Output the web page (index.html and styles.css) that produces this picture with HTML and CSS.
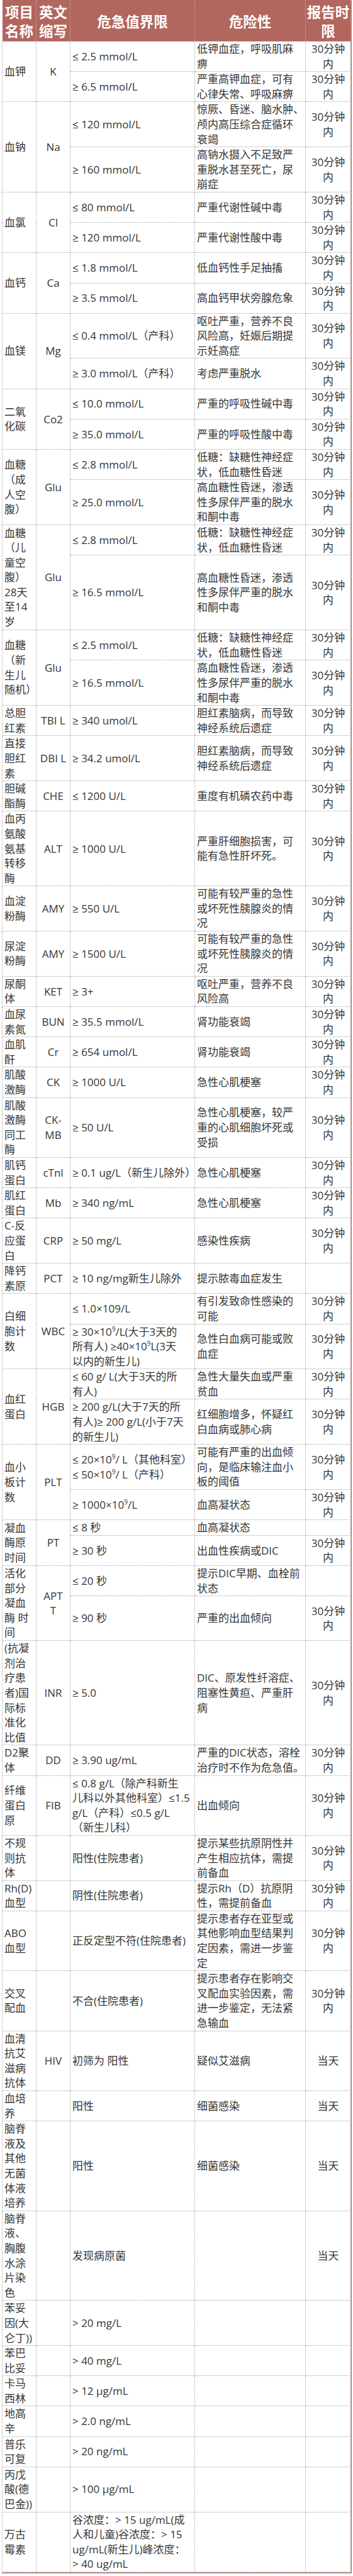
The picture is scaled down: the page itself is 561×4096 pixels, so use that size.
FILE: index.html
```html
<!DOCTYPE html>
<html lang="zh-CN">
<head>
<meta charset="utf-8">
<title>危急值报告</title>
<link rel="stylesheet" href="styles.css">
</head>
<body>
<div class="frame">
<table class="grid">
<colgroup><col class="w1"><col class="w2"><col class="w3"><col class="w4"><col class="w5"></colgroup>
<thead>
<tr><th>项目<br>名称</th><th>英文<br>缩写</th><th>危急值界限</th><th>危险性</th><th>报告时<br>限</th></tr>
</thead>
<tbody>
<tr><td rowspan="2">血钾</td><td rowspan="2" class="mid">K</td><td>≤ 2.5 mmol/L</td><td>低钾血症，呼吸肌麻<br>痹</td><td class="mid">30分钟<br>内</td></tr>
<tr><td>≥ 6.5 mmol/L</td><td>严重高钾血症，可有<br>心律失常、呼吸麻痹</td><td class="mid">30分钟<br>内</td></tr>

<tr><td rowspan="2">血钠</td><td rowspan="2" class="mid">Na</td><td>≤ 120 mmol/L</td><td>惊厥、昏迷、脑水肿、<br>颅内高压综合症循环<br>衰竭</td><td class="mid">30分钟<br>内</td></tr>
<tr><td>≥ 160 mmol/L</td><td>高钠水摄入不足致严<br>重脱水甚至死亡，尿<br>崩症</td><td class="mid">30分钟<br>内</td></tr>

<tr><td rowspan="2">血氯</td><td rowspan="2" class="mid">Cl</td><td>≤ 80 mmol/L</td><td>严重代谢性碱中毒</td><td class="mid">30分钟<br>内</td></tr>
<tr><td>≥ 120 mmol/L</td><td>严重代谢性酸中毒</td><td class="mid">30分钟<br>内</td></tr>

<tr><td rowspan="2">血钙</td><td rowspan="2" class="mid">Ca</td><td>≤ 1.8 mmol/L</td><td>低血钙性手足抽搐</td><td class="mid">30分钟<br>内</td></tr>
<tr><td>≥ 3.5 mmol/L</td><td>高血钙甲状旁腺危象</td><td class="mid">30分钟<br>内</td></tr>

<tr><td rowspan="2">血镁</td><td rowspan="2" class="mid">Mg</td><td>≤ 0.4 mmol/L（产科）</td><td>呕吐严重，营养不良<br>风险高，妊娠后期提<br>示妊高症</td><td class="mid">30分钟<br>内</td></tr>
<tr><td>≥ 3.0 mmol/L（产科）</td><td>考虑严重脱水</td><td class="mid">30分钟<br>内</td></tr>

<tr><td rowspan="2">二氧<br>化碳</td><td rowspan="2" class="mid">Co2</td><td>≤ 10.0 mmol/L</td><td>严重的呼吸性碱中毒</td><td class="mid">30分钟<br>内</td></tr>
<tr><td>≥ 35.0 mmol/L</td><td>严重的呼吸性酸中毒</td><td class="mid">30分钟<br>内</td></tr>

<tr><td rowspan="2">血糖<br>（成<br>人空<br>腹）</td><td rowspan="2" class="mid">Glu</td><td>≤ 2.8 mmol/L</td><td>低糖：缺糖性神经症<br>状，低血糖性昏迷</td><td class="mid">30分钟<br>内</td></tr>
<tr><td>≥ 25.0 mmol/L</td><td>高血糖性昏迷，渗透<br>性多尿伴严重的脱水<br>和酮中毒</td><td class="mid">30分钟<br>内</td></tr>

<tr><td rowspan="2">血糖<br>（儿<br>童空<br>腹）<br>28天<br>至14<br>岁</td><td rowspan="2" class="mid">Glu</td><td>≤ 2.8 mmol/L</td><td>低糖：缺糖性神经症<br>状，低血糖性昏迷</td><td class="mid">30分钟<br>内</td></tr>
<tr class="l5"><td>≥ 16.5 mmol/L</td><td>高血糖性昏迷，渗透<br>性多尿伴严重的脱水<br>和酮中毒</td><td class="mid">30分钟<br>内</td></tr>

<tr><td rowspan="2">血糖<br>（新<br>生儿<br>随机）</td><td rowspan="2" class="mid">Glu</td><td>≤ 2.5 mmol/L</td><td>低糖：缺糖性神经症<br>状，低血糖性昏迷</td><td class="mid">30分钟<br>内</td></tr>
<tr><td>≥ 16.5 mmol/L</td><td>高血糖性昏迷，渗透<br>性多尿伴严重的脱水<br>和酮中毒</td><td class="mid">30分钟<br>内</td></tr>

<tr><td>总胆<br>红素</td><td class="mid">TBI L</td><td>≥ 340 umol/L</td><td>胆红素脑病，而导致<br>神经系统后遗症</td><td class="mid">30分钟<br>内</td></tr>
<tr><td>直接<br>胆红<br>素</td><td class="mid">DBI L</td><td>≥ 34.2 umol/L</td><td>胆红素脑病，而导致<br>神经系统后遗症</td><td class="mid">30分钟<br>内</td></tr>
<tr><td>胆碱<br>酯酶</td><td class="mid">CHE</td><td>≤ 1200 U/L</td><td>重度有机磷农药中毒</td><td class="mid">30分钟<br>内</td></tr>
<tr><td>血丙<br>氨酸<br>氨基<br>转移<br>酶</td><td class="mid">ALT</td><td>≥ 1000 U/L</td><td>严重肝细胞损害，可<br>能有急性肝坏死。</td><td class="mid">30分钟<br>内</td></tr>
<tr><td>血淀<br>粉酶</td><td class="mid">AMY</td><td>≥ 550 U/L</td><td>可能有较严重的急性<br>或坏死性胰腺炎的情<br>况</td><td class="mid">30分钟<br>内</td></tr>
<tr><td>尿淀<br>粉酶</td><td class="mid">AMY</td><td>≥ 1500 U/L</td><td>可能有较严重的急性<br>或坏死性胰腺炎的情<br>况</td><td class="mid">30分钟<br>内</td></tr>
<tr><td>尿酮<br>体</td><td class="mid">KET</td><td>≥ 3+</td><td>呕吐严重，营养不良<br>风险高</td><td class="mid">30分钟<br>内</td></tr>
<tr><td>血尿<br>素氮</td><td class="mid">BUN</td><td>≥ 35.5 mmol/L</td><td>肾功能衰竭</td><td class="mid">30分钟<br>内</td></tr>
<tr><td>血肌<br>酐</td><td class="mid">Cr</td><td>≥ 654 umol/L</td><td>肾功能衰竭</td><td class="mid">30分钟<br>内</td></tr>
<tr><td>肌酸<br>激酶</td><td class="mid">CK</td><td>≥ 1000 U/L</td><td>急性心肌梗塞</td><td class="mid">30分钟<br>内</td></tr>
<tr><td>肌酸<br>激酶<br>同工<br>酶</td><td class="mid">CK-<br>MB</td><td>≥ 50 U/L</td><td>急性心肌梗塞，较严<br>重的心肌细胞坏死或<br>受损</td><td class="mid">30分钟<br>内</td></tr>
<tr><td>肌钙<br>蛋白</td><td class="mid">cTnl</td><td>≥ 0.1 ug/L（新生儿除外）</td><td>急性心肌梗塞</td><td class="mid">30分钟<br>内</td></tr>
<tr><td>肌红<br>蛋白</td><td class="mid">Mb</td><td>≥ 340 ng/mL</td><td>急性心肌梗塞</td><td class="mid">30分钟<br>内</td></tr>
<tr><td>C-反<br>应蛋<br>白</td><td class="mid">CRP</td><td>≥ 50 mg/L</td><td>感染性疾病</td><td class="mid">30分钟<br>内</td></tr>
<tr><td>降钙<br>素原</td><td class="mid">PCT</td><td>≥ 10 ng/mg新生儿除外</td><td>提示脓毒血症发生</td><td class="mid"></td></tr>

<tr><td rowspan="2">白细<br>胞计<br>数</td><td rowspan="2" class="mid">WBC</td><td>≤ 1.0×109/L</td><td>有引发致命性感染的<br>可能</td><td class="mid">30分钟<br>内</td></tr>
<tr><td>≥ 30×10<span class="sup">9</span>/L(大于3天的<br>所有人) ≥40×10<span class="sup">9</span>L(3天<br>以内的新生儿)</td><td>急性白血病可能或败<br>血症</td><td class="mid">30分钟<br>内</td></tr>

<tr><td rowspan="2">血红<br>蛋白</td><td rowspan="2" class="mid">HGB</td><td>≤ 60 g/ L(大于3天的所<br>有人)</td><td>急性大量失血或严重<br>贫血</td><td class="mid">30分钟<br>内</td></tr>
<tr><td>≥ 200 g/L(大于7天的所<br>有人)≥ 200 g/L(小于7天<br>的新生儿)</td><td>红细胞增多，怀疑红<br>白血病或肺心病</td><td class="mid">30分钟<br>内</td></tr>

<tr><td rowspan="2">血小<br>板计<br>数</td><td rowspan="2" class="mid">PLT</td><td>≤ 20×10<span class="sup">9</span>/ L（其他科室）<br>≤ 50×10<span class="sup">9</span>/ L（产科）</td><td>可能有严重的出血倾<br>向，是临床输注血小<br>板的阈值</td><td class="mid">30分钟<br>内</td></tr>
<tr><td>≥ 1000×10<span class="sup">9</span>/L</td><td>血高凝状态</td><td class="mid">30分钟<br>内</td></tr>

<tr><td rowspan="2">凝血<br>酶原<br>时间</td><td rowspan="2" class="mid">PT</td><td>≤ 8 秒</td><td>血高凝状态</td><td class="mid"></td></tr>
<tr><td>≥ 30 秒</td><td>出血性疾病或DIC</td><td class="mid">30分钟<br>内</td></tr>

<tr><td rowspan="2">活化<br>部分<br>凝血<br>酶 时<br>间</td><td rowspan="2" class="mid">APT<br>T</td><td>≤ 20 秒</td><td>提示DIC早期、血栓前<br>状态</td><td class="mid"></td></tr>
<tr class="l3"><td>≥ 90 秒</td><td>严重的出血倾向</td><td class="mid">30分钟<br>内</td></tr>

<tr><td>(抗凝<br>剂治<br>疗患<br>者)国<br>际标<br>准化<br>比值</td><td class="mid">INR</td><td>≥ 5.0</td><td>DIC、原发性纤溶症、<br>阻塞性黄疸、严重肝<br>病</td><td class="mid">30分钟<br>内</td></tr>
<tr><td>D2聚<br>体</td><td class="mid">DD</td><td>≥ 3.90 ug/mL</td><td>严重的DIC状态，溶栓<br>治疗时不作为危急值。</td><td class="mid">30分钟<br>内</td></tr>
<tr><td>纤维<br>蛋白<br>原</td><td class="mid">FIB</td><td>≤ 0.8 g/L（除产科新生<br>儿科以外其他科室）≤1.5<br>g/L（产科）≤0.5 g/L<br>（新生儿科）</td><td>出血倾向</td><td class="mid">30分钟<br>内</td></tr>
<tr><td>不规<br>则抗<br>体</td><td class="mid"></td><td>阳性(住院患者)</td><td>提示某些抗原阴性并<br>产生相应抗体，需提<br>前备血</td><td class="mid">30分钟<br>内</td></tr>
<tr><td>Rh(D)<br>血型</td><td class="mid"></td><td>阴性(住院患者)</td><td>提示Rh（D）抗原阴<br>性，需提前备血</td><td class="mid">30分钟<br>内</td></tr>
<tr><td>ABO<br>血型</td><td class="mid"></td><td>正反定型不符(住院患者)</td><td>提示患者存在亚型或<br>其他影响血型结果判<br>定因素，需进一步鉴<br>定</td><td class="mid">30分钟<br>内</td></tr>
<tr><td>交叉<br>配血</td><td class="mid"></td><td>不合(住院患者)</td><td>提示患者存在影响交<br>叉配血实验因素，需<br>进一步鉴定，无法紧<br>急输血</td><td class="mid">30分钟<br>内</td></tr>
<tr><td>血清<br>抗艾<br>滋病<br>抗体</td><td class="mid">HIV</td><td>初筛为 阳性</td><td>疑似艾滋病</td><td class="mid">当天</td></tr>
<tr><td>血培<br>养</td><td class="mid"></td><td>阳性</td><td>细菌感染</td><td class="mid">当天</td></tr>
<tr><td>脑脊<br>液及<br>其他<br>无菌<br>体液<br>培养</td><td class="mid"></td><td>阳性</td><td>细菌感染</td><td class="mid">当天</td></tr>
<tr><td>脑脊<br>液、<br>胸腹<br>水涂<br>片染<br>色</td><td class="mid"></td><td>发现病原菌</td><td></td><td class="mid">当天</td></tr>
<tr><td>苯妥<br>因(大<br>仑丁))</td><td class="mid"></td><td>&gt; 20 mg/L</td><td></td><td class="mid"></td></tr>
<tr><td>苯巴<br>比妥</td><td class="mid"></td><td>&gt; 40 mg/L</td><td></td><td class="mid"></td></tr>
<tr><td>卡马<br>西林</td><td class="mid"></td><td>&gt; 12 μg/mL</td><td></td><td class="mid"></td></tr>
<tr><td>地高<br>辛</td><td class="mid"></td><td>&gt; 2.0 ng/mL</td><td></td><td class="mid"></td></tr>
<tr><td>普乐<br>可复</td><td class="mid"></td><td>&gt; 20 ng/mL</td><td></td><td class="mid"></td></tr>
<tr><td>丙戊<br>酸(德<br>巴金))</td><td class="mid"></td><td>&gt; 100 μg/mL</td><td></td><td class="mid"></td></tr>
<tr><td>万古<br>霉素</td><td class="mid"></td><td>谷浓度：&gt; 15 ug/mL(成<br>人和儿童)谷浓度：&gt; 15<br>ug/mL(新生儿)峰浓度：<br>&gt; 40 ug/mL</td><td></td><td class="mid"></td></tr>
</tbody>
</table>
</div>
</body>
</html>
```

FILE: styles.css
```css
html, body {
  margin: 0;
  padding: 0;
  background: #ffffff;
}

body {
  font-family: "Open Sans", "Noto Sans CJK SC", sans-serif;
  color: #363636;
}

.frame {
  width: 554px;
  margin-left: 3px;
  border-right: 2px solid #b57d77;
  border-bottom: 2px solid #c0918c;
}

.grid {
  width: 554px;
  table-layout: fixed;
  border-collapse: collapse;
}

.w1 { width: 54px; }
.w2 { width: 54px; }
.w3 { width: 198px; }
.w4 { width: 176px; }
.w5 { width: 72px; }

.grid td {
  border: 1px dotted #a6a6a6;
  padding: 0 3px;
  white-space: nowrap;
  font-size: 17px;
  line-height: 23.6px;
  font-weight: 400;
  vertical-align: middle;
  text-align: left;
}

.grid thead th {
  background: #b1665e;
  color: #ffffff;
  font-family: "Noto Sans CJK SC", sans-serif;
  font-weight: 700;
  font-size: 22.5px;
  line-height: 30px;
  height: 65px;
  padding: 0;
  white-space: nowrap;
  text-align: center;
  vertical-align: middle;
  border-left: 1px dotted rgba(255, 255, 255, 0.45);
  border-right: 1px dotted rgba(255, 255, 255, 0.45);
  border-top: none;
  border-bottom: none;
}

.grid td.mid {
  text-align: center;
}

.grid tr.l5 td {
  height: 118px;
}

.grid tr.l3 td {
  height: 70px;
}

.sup {
  font-size: 10px;
  line-height: 0;
  vertical-align: 7px;
}
```
